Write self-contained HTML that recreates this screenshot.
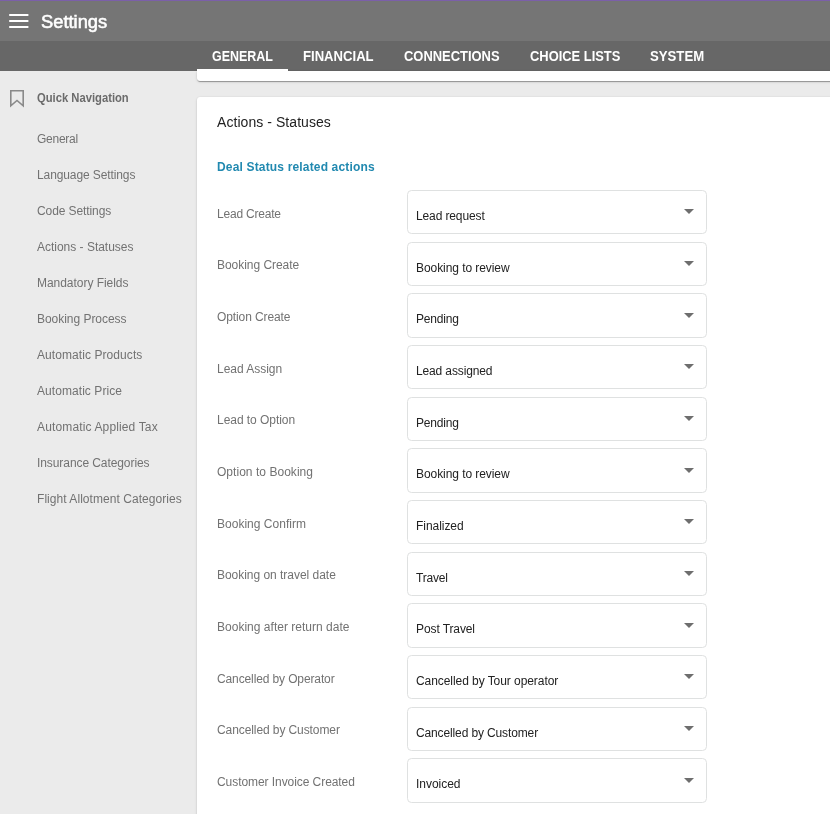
<!DOCTYPE html>
<html lang="en"><head><meta charset="utf-8"><title>Settings</title>
<style>
html,body{margin:0;padding:0;}
body{width:830px;height:814px;overflow:hidden;background:#ebebeb;font-family:"Liberation Sans",Arial,sans-serif;position:relative;color:#222;will-change:transform;}
.abs{position:absolute;white-space:nowrap;}
.topline{left:0;top:0;width:830px;height:1px;background:#7b5fa9;}
.header{left:0;top:1px;width:830px;height:40px;background:#757575;}
.tabbar{left:0;top:41px;width:830px;height:30px;background:#676767;}
.title{left:40.5px;top:11.5px;font-size:17.5px;font-weight:normal;-webkit-text-stroke:0.55px #fff;color:#fff;line-height:20px;}
.tab{top:48px;font-size:14px;font-weight:bold;color:#fff;line-height:16px;}
.ink{left:197px;top:69px;width:91px;height:2px;background:#fff;}
.card1{left:197px;top:71px;width:640px;height:10px;background:#fff;border-radius:0 0 0 3px;box-shadow:0 2px 1px -1px rgba(0,0,0,.2),0 1px 1px 0 rgba(0,0,0,.14),0 1px 3px 0 rgba(0,0,0,.12),0 0 1.5px 0 rgba(0,0,0,.10);}
.card2{left:197px;top:97px;width:640px;height:740px;background:#fff;border-radius:3px 0 0 0;box-shadow:0 2px 1px -1px rgba(0,0,0,.2),0 1px 1px 0 rgba(0,0,0,.14),0 1px 3px 0 rgba(0,0,0,.12),0 0 1.5px 0 rgba(0,0,0,.10);}
.qn{left:37px;top:90px;font-size:12px;font-weight:bold;color:#6b6b6b;line-height:16px;}
.nav{left:37px;font-size:12px;color:#727272;line-height:16px;}
.ctitle{left:217px;top:113px;font-size:14px;color:#222;line-height:18px;}
.stitle{left:217px;top:159px;font-size:12px;font-weight:bold;color:#2189b0;line-height:16px;}
.lbl{left:217px;font-size:12px;color:#727272;line-height:16px;}
.box{left:407px;width:298px;height:42px;border:1px solid #dfe1e1;border-radius:4.5px;background:#fff;}
.val{left:416px;font-size:12px;color:#222;line-height:16px;}
.arr{left:684px;width:0;height:0;border-left:5px solid transparent;border-right:5px solid transparent;border-top:5px solid #6e6e6e;}
</style></head><body>
<div class="abs header"></div>
<div class="abs topline"></div>
<div class="abs tabbar"></div>
<svg class="abs" style="left:0;top:0" width="40" height="41" viewBox="0 0 40 41"><rect x="9.2" y="14" width="19.2" height="2" fill="#fff"/><rect x="9.2" y="20" width="19.2" height="2" fill="#fff"/><rect x="9.2" y="26" width="19.2" height="2" fill="#fff"/></svg>
<div class="abs title" style="transform:scaleX(1.0461);transform-origin:0 50%;">Settings</div>
<div class="abs tab" style="left:212px;transform:scaleX(0.8902);transform-origin:0 50%;">GENERAL</div>
<div class="abs tab" style="left:303px;transform:scaleX(0.9361);transform-origin:0 50%;">FINANCIAL</div>
<div class="abs tab" style="left:403.5px;transform:scaleX(0.9234);transform-origin:0 50%;">CONNECTIONS</div>
<div class="abs tab" style="left:530px;transform:scaleX(0.9216);transform-origin:0 50%;">CHOICE LISTS</div>
<div class="abs tab" style="left:649.5px;transform:scaleX(0.9407);transform-origin:0 50%;">SYSTEM</div>
<div class="abs card1"></div>
<div class="abs ink"></div>
<div class="abs card2"></div>
<svg class="abs" style="left:5px;top:86px" width="24" height="24" viewBox="0 0 24 24"><path d="M5.8 4.8 H18.2 V19.8 L12 14.5 L5.8 19.8 Z" fill="none" stroke="#8a8a8a" stroke-width="1.6"/></svg>
<div class="abs qn" style="transform:scaleX(0.9357);transform-origin:0 50%;">Quick Navigation</div>
<div class="abs nav" style="top:131px;letter-spacing:-0.250px;">General</div>
<div class="abs nav" style="top:167px;letter-spacing:-0.106px;">Language Settings</div>
<div class="abs nav" style="top:203px;letter-spacing:-0.092px;">Code Settings</div>
<div class="abs nav" style="top:239px;letter-spacing:-0.012px;">Actions - Statuses</div>
<div class="abs nav" style="top:275px;letter-spacing:-0.040px;">Mandatory Fields</div>
<div class="abs nav" style="top:311px;letter-spacing:-0.036px;">Booking Process</div>
<div class="abs nav" style="top:347px;letter-spacing:0.076px;">Automatic Products</div>
<div class="abs nav" style="top:383px;letter-spacing:0.064px;">Automatic Price</div>
<div class="abs nav" style="top:419px;letter-spacing:0.140px;">Automatic Applied Tax</div>
<div class="abs nav" style="top:455px;letter-spacing:-0.079px;">Insurance Categories</div>
<div class="abs nav" style="top:491px;letter-spacing:0.050px;">Flight Allotment Categories</div>
<div class="abs ctitle" style="letter-spacing:0.059px;">Actions - Statuses</div>
<div class="abs stitle" style="letter-spacing:0.162px;">Deal Status related actions</div>
<div class="abs lbl" style="top:206px;letter-spacing:-0.200px;">Lead Create</div><div class="abs box" style="top:190px;height:42px"></div><div class="abs val" style="top:208px;letter-spacing:-0.118px;">Lead request</div><div class="abs arr" style="top:209px"></div>
<div class="abs lbl" style="top:257px;letter-spacing:-0.038px;">Booking Create</div><div class="abs box" style="top:242px;height:42px"></div><div class="abs val" style="top:260px;letter-spacing:-0.069px;">Booking to review</div><div class="abs arr" style="top:261px"></div>
<div class="abs lbl" style="top:309px;letter-spacing:-0.100px;">Option Create</div><div class="abs box" style="top:293px;height:43px"></div><div class="abs val" style="top:311px;letter-spacing:-0.167px;">Pending</div><div class="abs arr" style="top:313px"></div>
<div class="abs lbl" style="top:361px;letter-spacing:-0.020px;">Lead Assign</div><div class="abs box" style="top:345px;height:42px"></div><div class="abs val" style="top:363px;letter-spacing:-0.133px;">Lead assigned</div><div class="abs arr" style="top:364px"></div>
<div class="abs lbl" style="top:412px;letter-spacing:-0.046px;">Lead to Option</div><div class="abs box" style="top:397px;height:42px"></div><div class="abs val" style="top:415px;letter-spacing:-0.167px;">Pending</div><div class="abs arr" style="top:416px"></div>
<div class="abs lbl" style="top:464px;letter-spacing:0.037px;">Option to Booking</div><div class="abs box" style="top:448px;height:43px"></div><div class="abs val" style="top:466px;letter-spacing:-0.069px;">Booking to review</div><div class="abs arr" style="top:468px"></div>
<div class="abs lbl" style="top:516px;letter-spacing:0.021px;">Booking Confirm</div><div class="abs box" style="top:500px;height:42px"></div><div class="abs val" style="top:518px;letter-spacing:-0.050px;">Finalized</div><div class="abs arr" style="top:519px"></div>
<div class="abs lbl" style="top:567px;letter-spacing:-0.029px;">Booking on travel date</div><div class="abs box" style="top:552px;height:42px"></div><div class="abs val" style="top:570px;letter-spacing:-0.180px;">Travel</div><div class="abs arr" style="top:571px"></div>
<div class="abs lbl" style="top:619px;letter-spacing:0.017px;">Booking after return date</div><div class="abs box" style="top:603px;height:43px"></div><div class="abs val" style="top:621px;letter-spacing:-0.100px;">Post Travel</div><div class="abs arr" style="top:623px"></div>
<div class="abs lbl" style="top:671px;letter-spacing:-0.120px;">Cancelled by Operator</div><div class="abs box" style="top:655px;height:42px"></div><div class="abs val" style="top:673px;letter-spacing:-0.064px;">Cancelled by Tour operator</div><div class="abs arr" style="top:674px"></div>
<div class="abs lbl" style="top:722px;letter-spacing:-0.090px;">Cancelled by Customer</div><div class="abs box" style="top:707px;height:42px"></div><div class="abs val" style="top:725px;letter-spacing:-0.130px;">Cancelled by Customer</div><div class="abs arr" style="top:726px"></div>
<div class="abs lbl" style="top:774px;letter-spacing:-0.065px;">Customer Invoice Created</div><div class="abs box" style="top:758px;height:43px"></div><div class="abs val" style="top:776px;letter-spacing:-0.029px;">Invoiced</div><div class="abs arr" style="top:778px"></div>
</body></html>
